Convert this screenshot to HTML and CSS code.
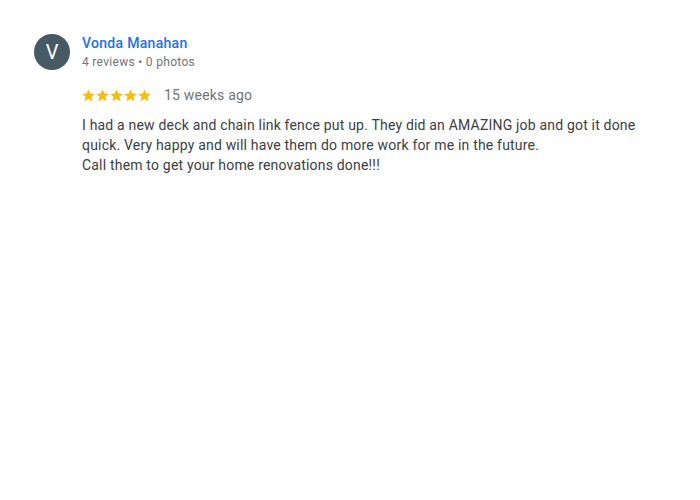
FILE: index.html
```html
<!DOCTYPE html>
<html lang="en">
<head>
    <meta charset="UTF-8">
    <title>Review</title>
    <link rel="stylesheet" href="styles.css">
</head>
<body>
    <div class="review">
        <div class="avatar">V</div>
        <div class="content">
            <div class="name">Vonda Manahan</div>
            <div class="meta">4 reviews &bull; 0 photos</div>
            <div class="rating">
                <svg class="stars" width="69" height="13" viewBox="0 0 69 13">
                    <defs>
                        <path id="star" d="M6.5 0.4l1.9 4.1 4.4 0.4-3.3 2.9 1 4.4-4-2.3-4 2.3 1-4.4-3.3-2.9 4.4-0.4z"/>
                    </defs>
                    <use href="#star" x="0"/>
                    <use href="#star" x="14"/>
                    <use href="#star" x="28"/>
                    <use href="#star" x="42"/>
                    <use href="#star" x="56"/>
                </svg>
                <span class="when">15 weeks ago</span>
            </div>
            <p class="text">I had a new deck and chain link fence put up. They did an AMAZING job and got it done quick. Very happy and will have them do more work for me in the future.<br>Call them to get your home renovations done!!!</p>
        </div>
    </div>
</body>
</html>
```

FILE: styles.css
```css
body {
    margin: 0;
    padding: 0;
    background: #ffffff;
    font-family: Roboto, Arial, sans-serif;
}
.review {
    display: flex;
    gap: 12px;
    padding: 34px 20px 0 34px;
}
.avatar {
    flex: none;
    width: 36px;
    height: 36px;
    border-radius: 50%;
    background: #455a64;
    color: #ffffff;
    font-size: 20px;
    line-height: 36px;
    text-align: center;
}
.name {
    color: #1a73e8;
    font-size: 14px;
    font-weight: 500;
    line-height: 18px;
    letter-spacing: 0.3px;
}
.meta {
    margin-top: 1px;
    color: #70757a;
    font-size: 12px;
    line-height: 18px;
    letter-spacing: 0.3px;
}
.rating {
    display: flex;
    align-items: center;
    gap: 13px;
    margin-top: 13px;
    height: 22px;
}
.stars {
    fill: #fbbc04;
}
.when {
    color: #70757a;
    font-size: 14px;
    letter-spacing: 0.2px;
}
.text {
    margin: 9px 0 0;
    max-width: 580px;
    color: #3c4043;
    font-size: 14px;
    line-height: 20px;
    letter-spacing: 0.19px;
}
```
